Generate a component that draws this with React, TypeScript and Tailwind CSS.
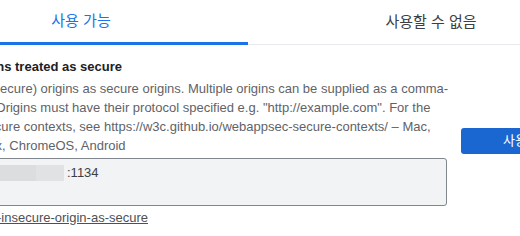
export default function App() {
  return (
    <div className="w-[520px] h-[236px] overflow-hidden bg-white" style={{ fontFamily: '"Liberation Sans", "Noto Sans CJK KR", sans-serif' }}>
      <div className="flex h-[45px] border-b border-[#e8eaed] ml-[-86px] w-[700px]">
        <div className="w-[334px] flex items-center justify-center text-[15px] text-[#1a73e8] border-b-[3px] border-[#1a73e8] mb-[-1px] pt-[1px]">
          사용 가능
        </div>
        <div className="w-[366px] flex items-center justify-center text-[15px] text-[#3c4043] pt-[1px]">
          사용할 수 없음
        </div>
      </div>

      <div className="flex items-start ml-[-89px]">
        <div className="w-[536px] shrink-0">
          <div className="mt-[12px] text-[13px] leading-[19px] font-bold text-[#202124] whitespace-nowrap">
            Insecure origins treated as secure
          </div>
          <div className="mt-[3px] text-[13px] leading-[19px] text-[#5f6368] whitespace-nowrap">
            Treat given (insecure) origins as secure origins. Multiple origins can be supplied as a comma-
            <br />
            separated list. Origins must have their protocol specified e.g. "http://example.com". For the
            <br />
            definition of secure contexts, see https://w3c.github.io/webappsec-secure-contexts/ – Mac,
            <br />
            Windows, Linux, ChromeOS, Android
          </div>
          <div className="mt-[3px] h-[48px] rounded-[3px] border border-[#80868b] bg-[#f1f3f4] flex items-start pt-[6px] pl-[84px]">
            <span className="w-[40px] h-[16px] bg-[#dcdddf]" />
            <span className="w-[28px] h-[16px] bg-[#e1e2e4]" />
            <span className="text-[13px] leading-[16px] text-[#3c4043] ml-[3px]">:1134</span>
          </div>
          <div className="mt-[2px] text-[13px] leading-[19px] text-[#4d5156] underline whitespace-nowrap">
            #unsafely-treat-insecure-origin-as-secure
          </div>
        </div>
        <div className="ml-[14px] mt-[83px] shrink-0 h-[26px] w-[80px] rounded-[3px] bg-[#1a67d2] text-white text-[13px] flex items-center pl-[42px] whitespace-nowrap">
          사용 설정
        </div>
      </div>
    </div>
  )
}
